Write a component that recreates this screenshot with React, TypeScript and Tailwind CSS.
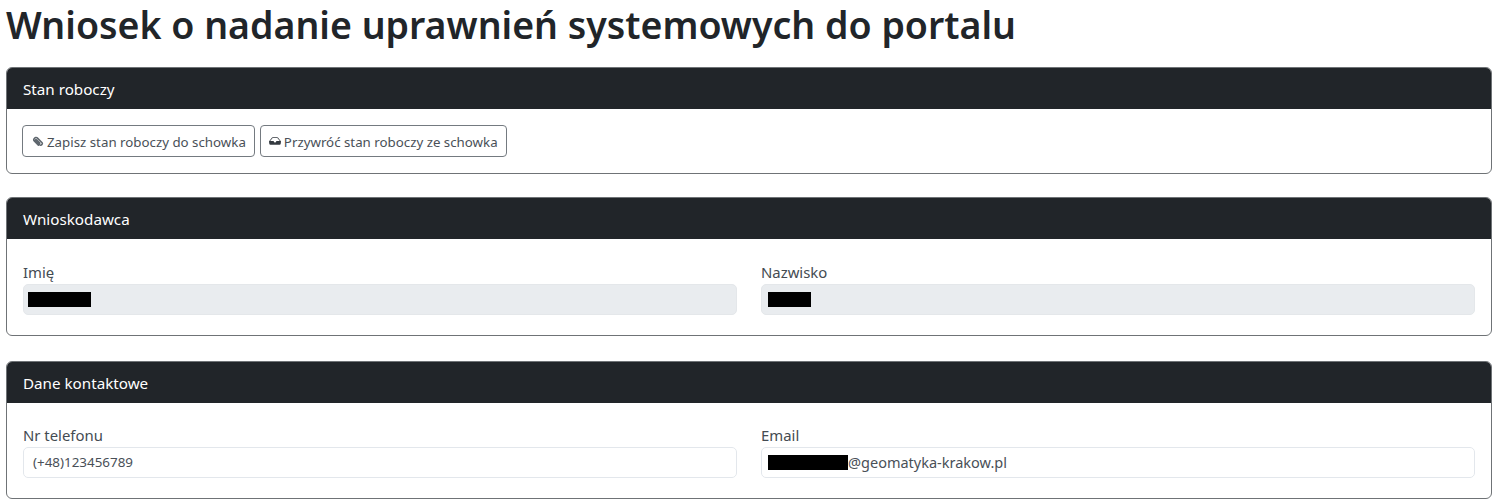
import { ReactNode } from 'react';
import { BsInboxFill } from 'react-icons/bs';

const font = { fontFamily: '"Noto Sans", "Open Sans", sans-serif' };

const Card = ({ title, className, children }: { title: string; className?: string; children: ReactNode }) => (
  <section className={`border border-[#6f7376] border-b-[1.5px] rounded-[6px] overflow-hidden bg-white ${className ?? ''}`}>
    <div className="h-[41px] bg-[#212529] text-white text-[15.2px] px-4 pt-px flex items-center">{title}</div>
    {children}
  </section>
);

interface FieldProps {
  label: string;
  value?: string;
  disabled?: boolean;
  mask?: number;
  boxClass: string;
}

const Field = ({ label, value, disabled, mask, boxClass }: FieldProps) => (
  <div className="flex-1">
    <div className="text-[14.9px] leading-[20px] text-[#444b52] mb-[2px]">{label}</div>
    <div
      className={`h-[31px] rounded-[5px] border flex items-center text-[#495057] ${
        disabled ? 'bg-[#e9ecef] border-[#e4e7ea]' : 'bg-white border-[#e3e7ec]'
      } ${boxClass}`}
    >
      {mask && <span className="h-[15px] bg-black" style={{ width: mask }} />}
      {value}
    </div>
  </div>
);

const PaperclipIcon = () => (
  <svg viewBox="0 0 16 16" className="w-[12px] h-[12px] text-[#5f676e]" fill="none" stroke="currentColor" strokeWidth="2" strokeLinecap="round">
    <path d="M8.500 13.500 3 8C.800 5.800 4.800 1.600 7 3.800l6.200 6.200c1.800 1.800-1.200 4.800-3 3L4.800 7.600c-.8-.8.300-2 1.200-1.200l4.400 4.400" />
  </svg>
);

const ToolButton = ({ icon, className, children }: { icon: ReactNode; className: string; children: ReactNode }) => (
  <button className={`h-[32px] pr-[8px] flex items-center gap-[3px] border border-[#747a80] rounded-[4px] text-[13.3px] text-[#495057] bg-white whitespace-nowrap ${className}`}>
    {icon}
    <span className="relative top-[1.500px]">{children}</span>
  </button>
);

export default function App() {
  return (
    <div className="w-[1497px] h-[500px] overflow-hidden bg-white" style={font}>
      <h1 className="text-[37.500px] leading-[50px] font-semibold text-[#212529] pl-[6px] h-[67px]">
        Wniosek o nadanie uprawnień systemowych do portalu
      </h1>
      <div className="mx-[6px] w-[1486px] flex flex-col gap-[23px]">
        <Card title="Stan roboczy">
          <div className="h-[64px] px-[15px] pt-4 flex gap-[5px]">
            <ToolButton className="pl-[9px]" icon={<PaperclipIcon />}>Zapisz stan roboczy do schowka</ToolButton>
            <ToolButton className="pl-[8px]" icon={<BsInboxFill className="w-[12px] h-[12px] text-[#343a40]" />}>Przywróć stan roboczy ze schowka</ToolButton>
          </div>
        </Card>
        <Card title="Wnioskodawca">
          <div className="h-[96px] px-4 pt-[23px] flex gap-6">
            <Field label="Imię" disabled mask={63} boxClass="pl-[4px]" />
            <Field label="Nazwisko" disabled mask={43} boxClass="pl-[6px]" />
          </div>
        </Card>
        <Card title="Dane kontaktowe" className="mt-[2px]">
          <div className="h-[95px] px-4 pt-[22px] flex gap-6">
            <Field label="Nr telefonu" value="(+48)123456789" boxClass="pl-[9px] text-[13.4px]" />
            <Field label="Email" value="@geomatyka-krakow.pl" mask={80} boxClass="pl-[6px] text-[14.5px]" />
          </div>
        </Card>
      </div>
    </div>
  );
}
